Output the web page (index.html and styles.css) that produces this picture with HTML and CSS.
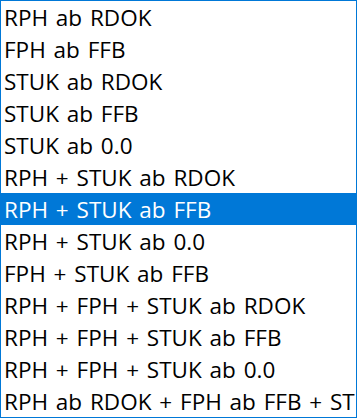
FILE: index.html
```html
<!DOCTYPE html>
<html>
<head>
  <link rel="stylesheet" href="styles.css">
</head>
<body>
  <ul class="listbox">
    <li>RPH ab RDOK</li>
    <li>FPH ab FFB</li>
    <li>STUK ab RDOK</li>
    <li>STUK ab FFB</li>
    <li>STUK ab 0.0</li>
    <li>RPH + STUK ab RDOK</li>
    <li class="selected">RPH + STUK ab FFB</li>
    <li>RPH + STUK ab 0.0</li>
    <li>FPH + STUK ab FFB</li>
    <li>RPH + FPH + STUK ab RDOK</li>
    <li>RPH + FPH + STUK ab FFB</li>
    <li>RPH + FPH + STUK ab 0.0</li>
    <li>RPH ab RDOK + FPH ab FFB + STUK ab 0.0</li>
  </ul>
</body>
</html>
```

FILE: styles.css
```css
body {
  margin: 0;
  background: #fff;
}

.listbox {
  list-style: none;
  margin: 0;
  padding: 0;
  width: 357px;
  height: 418px;
  box-sizing: border-box;
  border: 1px solid #0078d7;
  overflow: hidden;
  font-family: 'Open Sans', sans-serif;
  font-size: 22.5px;
  word-spacing: 2px;
  color: #000;
}

.listbox li {
  height: 32px;
  box-sizing: border-box;
  padding: 2px 0 0 3px;
  line-height: 30px;
  white-space: nowrap;
}

.listbox li.selected {
  background-color: #0078d7;
  color: #fff;
}
```
